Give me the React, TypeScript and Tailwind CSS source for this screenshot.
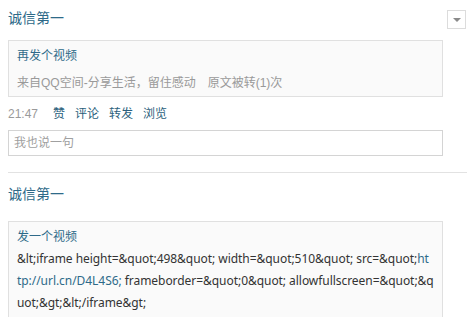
const font = "font-['Liberation_Sans','Noto_Sans_CJK_SC',sans-serif]";
const codeFont = "font-['Noto_Sans','Noto_Sans_CJK_SC',sans-serif] tracking-[-0.05px]";

function FeedTitle() {
  return <div className="text-[14px] leading-[20px] text-[#2e6a89]">诚信第一</div>;
}

export default function App() {
  return (
    <div className={`${font} min-h-screen bg-white pl-2 pr-[5px] text-[12px] text-[#333]`}>
      <div className="flex items-start justify-between pt-[8px]">
        <FeedTitle />
        <button
          type="button"
          className="mt-[2px] flex h-[19px] w-[19px] items-center justify-center border border-[#dcdcdc] bg-white"
        >
          <span className="h-0 w-0 border-x-[4px] border-t-[4px] border-x-transparent border-t-[#8a8a8a]" />
        </button>
      </div>

      <div className="mt-[11px] w-[435px] border border-[#e0e0e0] bg-[#fafafa] pl-2 pt-[5px] pb-[3px]">
        <div className="leading-[20px] text-[#2e6a89]">再发个视频</div>
        <div className="mt-[7px] flex gap-3 leading-[20px] text-[#999]">
          <span>来自QQ空间-分享生活，留住感动</span>
          <span>原文被转(1)次</span>
        </div>
      </div>

      <div className="mt-[7px] flex items-center leading-[20px]">
        <span className="text-[#9a9a9a]">21:47</span>
        <div className="ml-[15px] flex gap-[10px] text-[#2b5f7c]">
          <a href="#">赞</a>
          <a href="#">评论</a>
          <a href="#">转发</a>
          <a href="#">浏览</a>
        </div>
      </div>

      <div className="mt-[6px] flex h-[26px] w-[435px] items-center border border-[#d4d4d4] px-[5px] text-[#a0a0a0]">
        我也说一句
      </div>

      <div className="mt-[16px] h-px w-[459px] bg-[#e2e2e2]" />

      <div className="mt-[11px]">
        <FeedTitle />
      </div>

      <div className="mt-[17px] w-[435px] border border-[#e0e0e0] bg-[#fafafa] pl-2 pt-[4px] pb-2 leading-[22px]">
        <div className="text-[#2e6a89]">发一个视频</div>
        <div className={`${codeFont} whitespace-nowrap`}>
          &amp;lt;iframe height=&amp;quot;498&amp;quot; width=&amp;quot;510&amp;quot; src=&amp;quot;
          <span className="text-[#2e6a89]">ht</span>
        </div>
        <div className={`${codeFont} whitespace-nowrap`}>
          <span className="text-[#2e6a89]">tp://url.cn/D4L4S6;</span> frameborder=&amp;quot;0&amp;quot;
          allowfullscreen=&amp;quot;&amp;q
        </div>
        <div className={`${codeFont} whitespace-nowrap`}>uot;&amp;gt;&amp;lt;/iframe&amp;gt;</div>
      </div>
    </div>
  );
}
